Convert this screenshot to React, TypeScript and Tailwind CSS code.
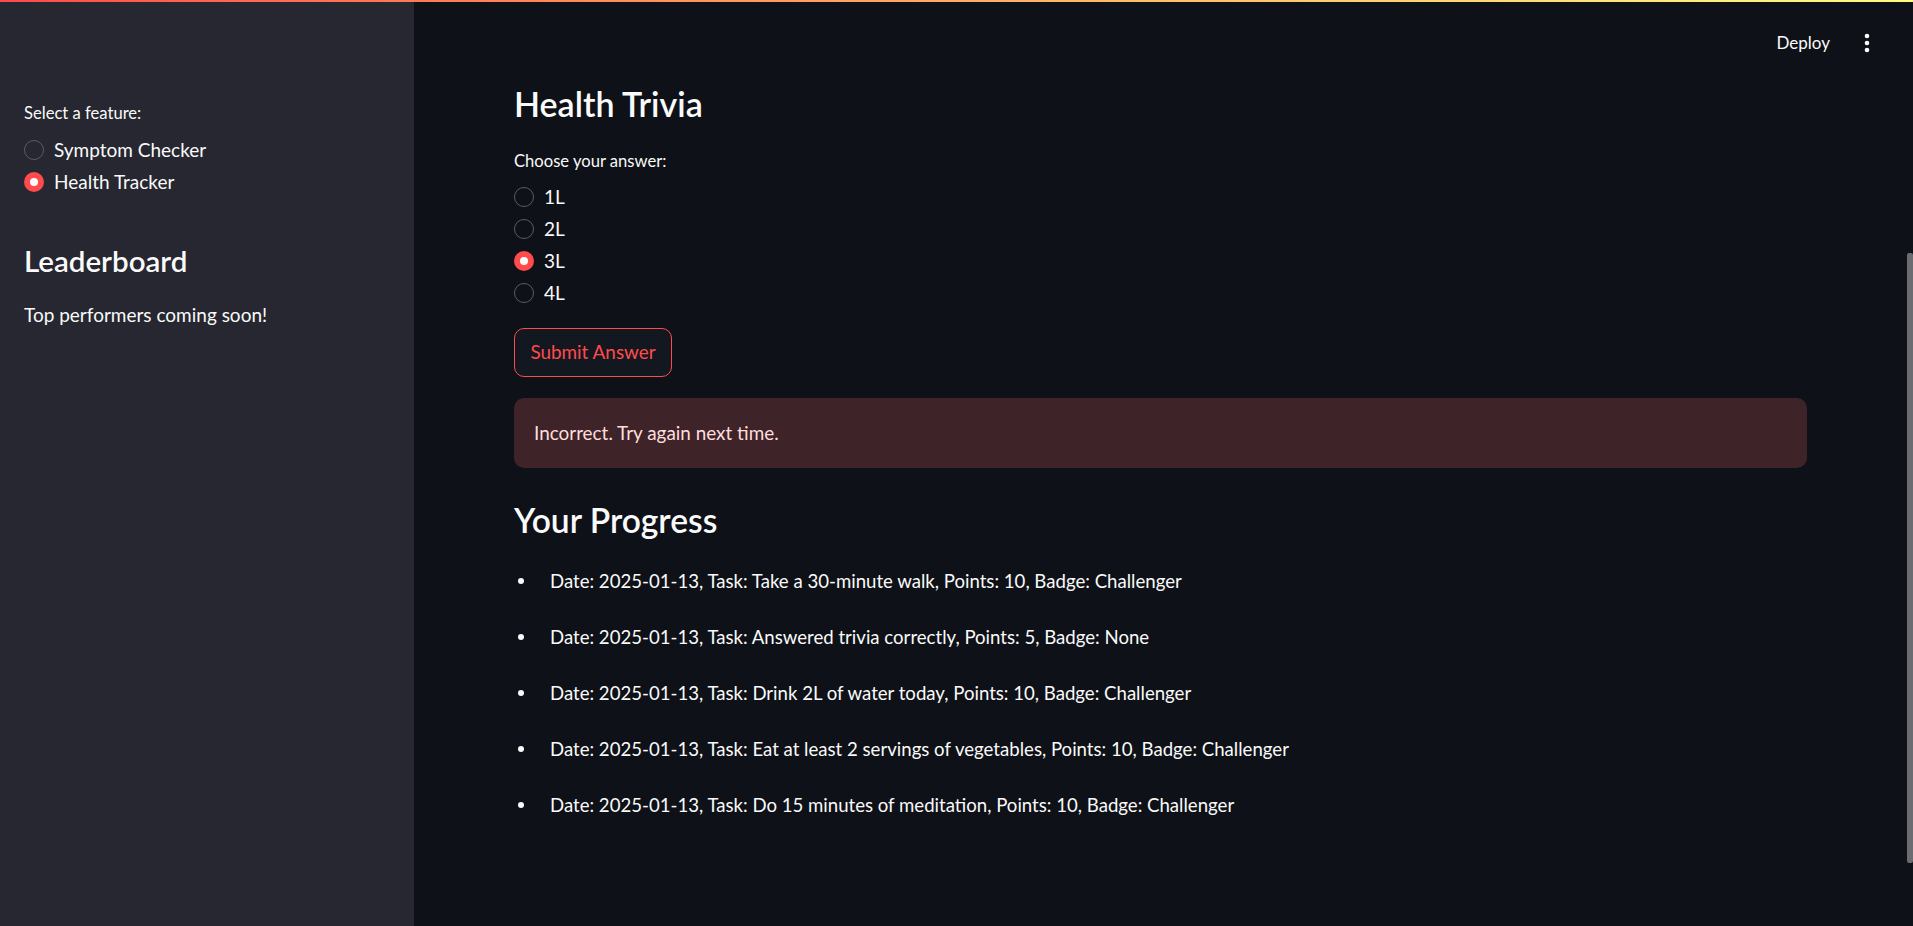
import React from "react";

const font = { fontFamily: "Lato, 'Noto Sans', sans-serif" };

interface RadioProps {
    label: string;
    checked?: boolean;
}

const Radio = ({ label, checked }: RadioProps): JSX.Element => (
    <div className="flex h-[32px] items-center gap-[10px]">
        {checked ? (
            <span className="flex h-[20px] w-[20px] items-center justify-center rounded-full bg-[#ff4b4b]">
                <span className="h-[8px] w-[8px] rounded-full bg-[#fafafa]" />
            </span>
        ) : (
            <span className="h-[20px] w-[20px] rounded-full border border-[#5a5c66]" />
        )}
        <span className="text-[19px] leading-[30px] text-[#fafafa]">{label}</span>
    </div>
);

const progress = [
    "Date: 2025-01-13, Task: Take a 30-minute walk, Points: 10, Badge: Challenger",
    "Date: 2025-01-13, Task: Answered trivia correctly, Points: 5, Badge: None",
    "Date: 2025-01-13, Task: Drink 2L of water today, Points: 10, Badge: Challenger",
    "Date: 2025-01-13, Task: Eat at least 2 servings of vegetables, Points: 10, Badge: Challenger",
    "Date: 2025-01-13, Task: Do 15 minutes of meditation, Points: 10, Badge: Challenger",
];

export default function App(): JSX.Element {
    return (
        <div className="relative flex h-[926px] w-full overflow-hidden bg-[#0e1117]" style={font}>
            {/* top decoration bar */}
            <div className="absolute left-0 right-0 top-0 z-10 h-[2px] bg-gradient-to-r from-[#ff4b4b] to-[#fffd80]" />

            <aside className="flex w-[414px] shrink-0 flex-col bg-[#262730] pl-[24px] pt-[100px] text-[#fafafa]">
                <p className="text-[16.6px] leading-[26px]">Select a feature:</p>
                <div className="mt-[8px] flex flex-col">
                    <Radio label="Symptom Checker" />
                    <Radio label="Health Tracker" checked />
                </div>
                <h2 className="mt-[45px] text-[29.5px] font-semibold leading-[36px]">Leaderboard</h2>
                <p className="mt-[21px] text-[19px] leading-[30px]">Top performers coming soon!</p>
            </aside>

            <main className="relative flex flex-1 flex-col text-[#fafafa]">
                <header className="flex h-[86px] items-center justify-end gap-[34px] pr-[43px]">
                    <span className="text-[17px]">Deploy</span>
                    <svg width="6" height="20" viewBox="0 0 6 20" fill="#fafafa">
                        <circle cx="3" cy="3" r="2.3" />
                        <circle cx="3" cy="10" r="2.3" />
                        <circle cx="3" cy="17" r="2.3" />
                    </svg>
                </header>

                <div className="flex flex-col pl-[100px] pr-[106px]">
                    <h2 className="text-[34px] font-semibold leading-[36px]">Health Trivia</h2>
                    <p className="mt-[26px] text-[16.6px] leading-[26px]">Choose your answer:</p>
                    <div className="mt-[7px] flex flex-col">
                        <Radio label="1L" />
                        <Radio label="2L" />
                        <Radio label="3L" checked />
                        <Radio label="4L" />
                    </div>
                    <button className="mt-[19px] h-[49px] w-[158px] rounded-[10px] border border-[#ff4b4b] bg-[#131720] text-[18.9px] text-[#ff4b4b]">
                        Submit Answer
                    </button>
                    <div className="mt-[21px] flex h-[70px] items-center rounded-[10px] bg-[#3e2328] px-[20px] text-[18.9px] text-[#ffdede]">
                        Incorrect. Try again next time.
                    </div>
                    <h2 className="mt-[34px] text-[33.6px] font-semibold leading-[36px]">Your Progress</h2>
                    <ul className="mt-[29px] flex flex-col gap-[28px]">
                        {progress.map((item, key) => (
                            <li key={key} className="flex h-[28px] items-center">
                                <span className="ml-[4px] h-[6px] w-[6px] rounded-full bg-[#fafafa]" />
                                <span className="ml-[26px] text-[18.6px] leading-[28px]">{item}</span>
                            </li>
                        ))}
                    </ul>
                </div>

                {/* scrollbar thumb */}
                <div className="absolute right-0 top-[253px] h-[610px] w-[6px] rounded-[2px] bg-[#6b6c71]" />
            </main>
        </div>
    );
}
